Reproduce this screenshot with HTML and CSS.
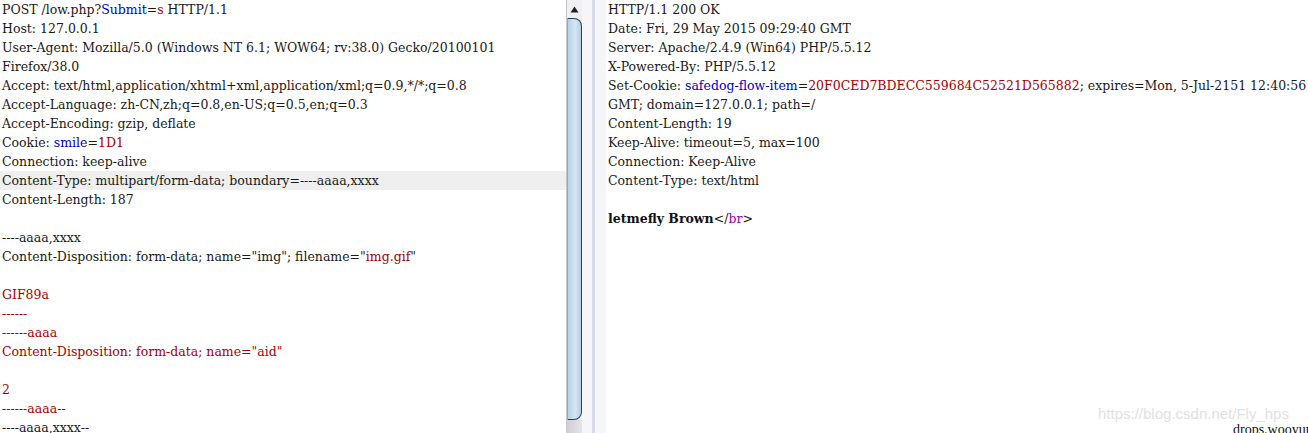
FILE: index.html
```html
<!DOCTYPE html>
<html>
<head>
<meta charset="utf-8">
<link rel="stylesheet" href="styles.css">
</head>
<body>
<div class="app">
  <div class="pane left">
    <div class="line">POST /low.php?<span class="k">Submit</span>=<span class="v">s</span> HTTP/1.1</div>
    <div class="line">Host: 127.0.0.1</div>
    <div class="line">User-Agent: Mozilla/5.0 (Windows NT 6.1; WOW64; rv:38.0) Gecko/20100101</div>
    <div class="line">Firefox/38.0</div>
    <div class="line">Accept: text/html,application/xhtml+xml,application/xml;q=0.9,*/*;q=0.8</div>
    <div class="line">Accept-Language: zh-CN,zh;q=0.8,en-US;q=0.5,en;q=0.3</div>
    <div class="line">Accept-Encoding: gzip, deflate</div>
    <div class="line">Cookie: <span class="k">smile</span>=<span class="v">1D1</span></div>
    <div class="line">Connection: keep-alive</div>
    <div class="line hl">Content-Type: multipart/form-data; boundary=----aaaa,xxxx</div>
    <div class="line">Content-Length: 187</div>
    <div class="line"> </div>
    <div class="line">----aaaa,xxxx</div>
    <div class="line">Content-Disposition: form-data; name="img"; filename="<span class="v">img.gif</span>"</div>
    <div class="line"> </div>
    <div class="line v">GIF89a</div>
    <div class="line v">------</div>
    <div class="line v">------aaaa</div>
    <div class="line v">Content-Disposition: form-data; name="aid"</div>
    <div class="line"> </div>
    <div class="line v">2</div>
    <div class="line v">------aaaa--</div>
    <div class="line">----aaaa,xxxx--</div>
  </div>
  <div class="scrollbar">
    <div class="arrow"><svg width="9" height="7" viewBox="0 0 9 7"><path d="M4.5 0.5 L8.5 6.5 L0.5 6.5 Z" fill="#222"/></svg></div>
    <div class="track"><div class="thumb"></div></div>
    <div class="bottom"></div>
  </div>
  <div class="splitter"><div class="divline"></div></div>
  <div class="pane right">
    <div class="line">HTTP/1.1 200 OK</div>
    <div class="line">Date: Fri, 29 May 2015 09:29:40 GMT</div>
    <div class="line">Server: Apache/2.4.9 (Win64) PHP/5.5.12</div>
    <div class="line">X-Powered-By: PHP/5.5.12</div>
    <div class="line">Set-Cookie: <span class="k">safedog-flow-item</span>=<span class="v">20F0CED7BDECC559684C52521D565882</span>; expires=Mon, 5-Jul-2151 12:40:56</div>
    <div class="line">GMT; domain=127.0.0.1; path=/</div>
    <div class="line">Content-Length: 19</div>
    <div class="line">Keep-Alive: timeout=5, max=100</div>
    <div class="line">Connection: Keep-Alive</div>
    <div class="line">Content-Type: text/html</div>
    <div class="line"> </div>
    <div class="line"><b>letmefly Brown</b>&lt;/<span class="tag">br</span>&gt;</div>
  </div>
</div>
<div class="watermark">https://blog.csdn.net/Fly_hps</div>
<div class="drops">drops.wooyun</div>
</body>
</html>
```

FILE: styles.css
```css
html, body {
  margin: 0;
  padding: 0;
  background: #fff;
}
body {
  width: 1308px;
  height: 433px;
  overflow: hidden;
  position: relative;
  font-family: "DejaVu Serif", serif;
  font-size: 12.5px;
  color: #1a1a1a;
}
.app {
  display: flex;
  height: 433px;
}
.pane {
  overflow: hidden;
}
.left {
  width: 566px;
  flex: none;
}
.right {
  flex: 1;
}
.line {
  height: 19px;
  line-height: 19px;
  padding-left: 2px;
  white-space: pre;
}
.hl {
  background: #efefef;
}
.k { color: #0000c8; }
.v { color: #a80000; }
.tag { color: #a000a0; }
b { font-weight: bold; color: #111; }
.scrollbar {
  width: 15px;
  flex: none;
  display: flex;
  flex-direction: column;
  background: #f0f0f2;
  border-left: 1px solid #c8c8cc;
}
.arrow {
  height: 18px;
  display: flex;
  justify-content: center;
  align-items: center;
  padding-right: 1px;
}
.track {
  flex: 1;
  display: flex;
}
.thumb {
  flex: 1;
  border: 1px solid #2c3e50;
  border-left-color: #8fa8c0;
  border-radius: 0 8px 8px 0;
  background: linear-gradient(to right, #b8d2e8, #d4e6f4 55%, #b4cce2);
}
.bottom {
  height: 13px;
  background: linear-gradient(to right, #d0d0d4, #e4e4e8);
}
.splitter {
  width: 24px;
  flex: none;
  background: #f6f6f9;
  display: flex;
  padding-left: 10px;
  box-sizing: border-box;
}
.divline {
  width: 3px;
  background: #d8dbe5;
}
.watermark {
  position: absolute;
  left: 1098px;
  top: 405px;
  font-family: "Liberation Sans", sans-serif;
  font-size: 15px;
  color: #e2e2e2;
}
.drops {
  position: absolute;
  left: 1233px;
  top: 422px;
  font-family: "Liberation Serif", serif;
  font-size: 14px;
  color: #111;
}
```
